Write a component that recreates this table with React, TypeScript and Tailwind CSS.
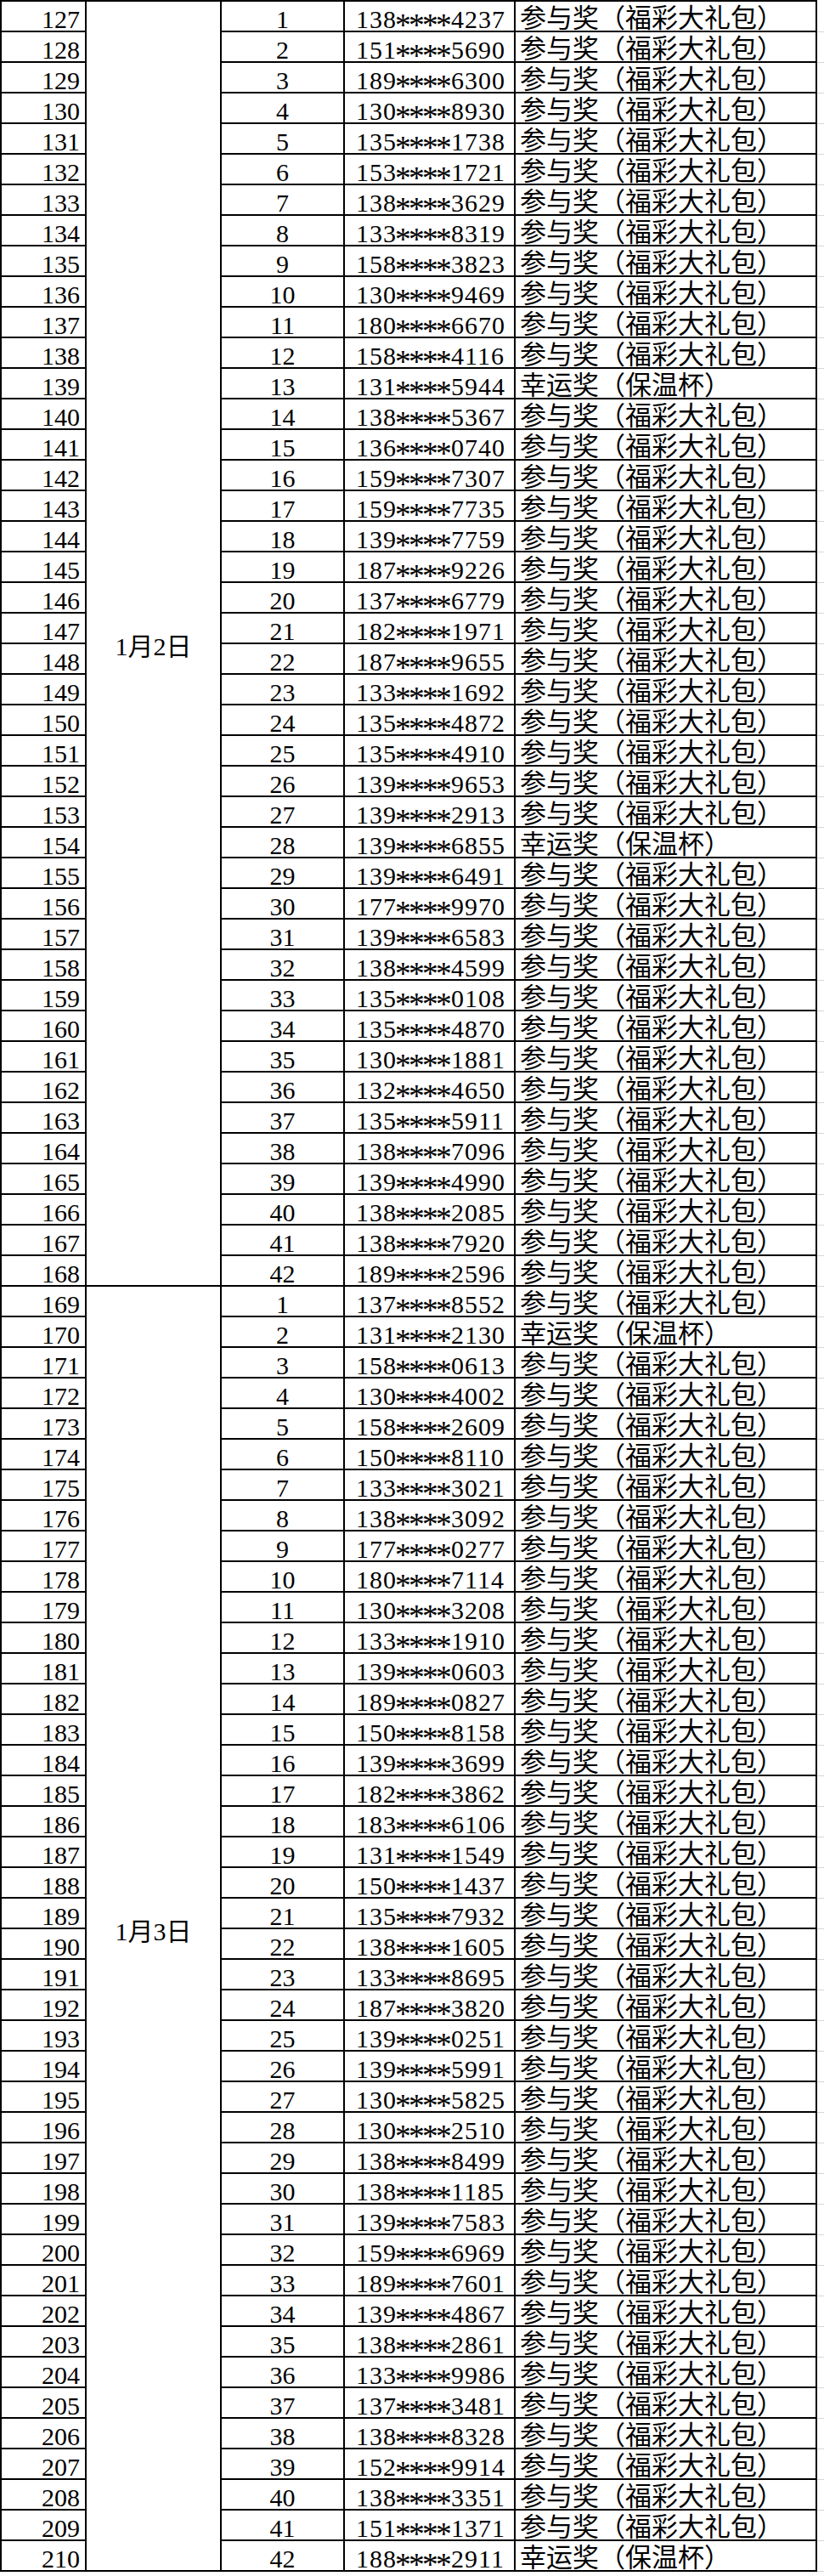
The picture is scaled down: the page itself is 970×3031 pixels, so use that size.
import React from "react";

const g1: [string, number][] = [
  ["138****4237", 0], ["151****5690", 0], ["189****6300", 0], ["130****8930", 0], ["135****1738", 0],
  ["153****1721", 0], ["138****3629", 0], ["133****8319", 0], ["158****3823", 0], ["130****9469", 0],
  ["180****6670", 0], ["158****4116", 0], ["131****5944", 1], ["138****5367", 0], ["136****0740", 0],
  ["159****7307", 0], ["159****7735", 0], ["139****7759", 0], ["187****9226", 0], ["137****6779", 0],
  ["182****1971", 0], ["187****9655", 0], ["133****1692", 0], ["135****4872", 0], ["135****4910", 0],
  ["139****9653", 0], ["139****2913", 0], ["139****6855", 1], ["139****6491", 0], ["177****9970", 0],
  ["139****6583", 0], ["138****4599", 0], ["135****0108", 0], ["135****4870", 0], ["130****1881", 0],
  ["132****4650", 0], ["135****5911", 0], ["138****7096", 0], ["139****4990", 0], ["138****2085", 0],
  ["138****7920", 0], ["189****2596", 0],
];

const g2: [string, number][] = [
  ["137****8552", 0], ["131****2130", 1], ["158****0613", 0], ["130****4002", 0], ["158****2609", 0],
  ["150****8110", 0], ["133****3021", 0], ["138****3092", 0], ["177****0277", 0], ["180****7114", 0],
  ["130****3208", 0], ["133****1910", 0], ["139****0603", 0], ["189****0827", 0], ["150****8158", 0],
  ["139****3699", 0], ["182****3862", 0], ["183****6106", 0], ["131****1549", 0], ["150****1437", 0],
  ["135****7932", 0], ["138****1605", 0], ["133****8695", 0], ["187****3820", 0], ["139****0251", 0],
  ["139****5991", 0], ["130****5825", 0], ["130****2510", 0], ["138****8499", 0], ["138****1185", 0],
  ["139****7583", 0], ["159****6969", 0], ["189****7601", 0], ["139****4867", 0], ["138****2861", 0],
  ["133****9986", 0], ["137****3481", 0], ["138****8328", 0], ["152****9914", 0], ["138****3351", 0],
  ["151****1371", 0], ["188****2911", 1],
];

const groups = [
  { date: "1月2日", start: 127, rows: g1 },
  { date: "1月3日", start: 169, rows: g2 },
];

function Phone({ v }: { v: string }) {
  const a = v.slice(0, 3);
  const b = v.slice(7);
  return (
    <span className="tracking-[1px]">
      {a}
      <span className="inline-block translate-y-[6px] scale-125">*</span>
      <span className="inline-block translate-y-[6px] scale-125">*</span>
      <span className="inline-block translate-y-[6px] scale-125">*</span>
      <span className="inline-block translate-y-[6px] scale-125">*</span>
      {b}
    </span>
  );
}

export default function App() {
  return (
    <div className="w-[970px] bg-white text-black font-['Liberation_Serif','Noto_Sans_CJK_SC',serif] text-[30px]">
      <div className="flex">
        <div className="w-[962px] border-l-2 border-t-2 border-black">
          {groups.map((g) => (
            <div key={g.date} className="flex">
              <div className="w-[100px] flex flex-col">
                {g.rows.map((_, i) => (
                  <div
                    key={i}
                    className="h-[36px] border-b-2 border-r-2 border-black flex items-end justify-end pr-[6px] leading-[26px]"
                  >
                    {g.start + i}
                  </div>
                ))}
              </div>
              <div className="w-[159px] border-b-2 border-r-2 border-black flex items-center justify-center pt-[6px]">
                {g.date}
              </div>
              <div className="flex flex-col">
                {g.rows.map(([phone, t], i) => (
                  <div key={i} className="h-[36px] flex border-b-2 border-black leading-[26px]">
                    <div className="w-[145px] border-r-2 border-black flex items-end justify-center">
                      {i + 1}
                    </div>
                    <div className="w-[201px] border-r-2 border-black flex items-end pl-[13px] whitespace-nowrap">
                      <Phone v={phone} />
                    </div>
                    <div className="w-[355px] border-r-2 border-black flex items-end pl-[5px] whitespace-nowrap font-['Noto_Sans_CJK_SC',sans-serif] text-[31px] leading-[34px]">
                      {t === 1 ? "幸运奖（保温杯）" : "参与奖（福彩大礼包）"}
                    </div>
                  </div>
                ))}
              </div>
            </div>
          ))}
        </div>
        <div className="w-[8px] flex flex-col pt-[2px]">
          {Array.from({ length: 84 }).map((_, i) => (
            <div key={i} className="h-[36px] border-b border-[#d6d6d6]" />
          ))}
        </div>
      </div>
    </div>
  );
}
